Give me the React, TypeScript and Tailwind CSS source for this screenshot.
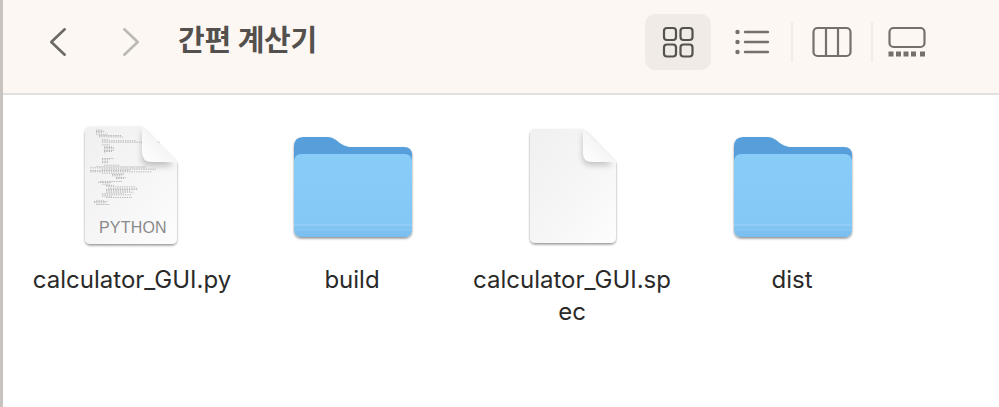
import { useId } from 'react'

const codeLines: [number, number, number][] = [
  [8, 14, 7], [8, 17, 9], [8, 20, 6], [8, 23, 12], [11, 26, 22], [11, 29, 24], [14, 35, 7],
  [14, 38, 34], [14, 41, 58], [14, 47, 8], [16, 50, 8], [16, 53, 10], [16, 56, 10], [16, 59, 10], [16, 62, 8],
  [16, 65, 2], [14, 77, 12], [14, 80, 8], [14, 83, 6], [14, 86, 6], [16, 92, 16], [8, 95, 50], [2, 98, 56], [14, 101, 54],
  [2, 104, 40], [2, 107, 62], [14, 110, 22], [24, 113, 12], [24, 116, 10], [28, 119, 10], [28, 122, 8],
]
const codeLines2: [number, number, number][] = [
  [12, 128, 22], [10, 131, 14], [14, 134, 8], [18, 137, 8], [18, 140, 30], [20, 143, 30], [18, 146, 32],
  [18, 149, 24], [18, 152, 28], [14, 155, 22], [14, 158, 30], [14, 161, 10], [18, 164, 26], [8, 170, 8], [6, 173, 14], [6, 176, 12], [8, 179, 14],
]

function DocIcon({ code }: { code?: boolean }) {
  const id = useId()
  return (
    <svg width={code ? 100 : 94} height="130" viewBox={code ? '0 0 100 130' : '0 0 94 130'} className="block">
      <defs>
        <linearGradient id={`${id}b`} x1="0" y1="0" x2="1" y2="1">
          <stop offset="0" stopColor="#f0f0f0" />
          <stop offset="0.55" stopColor="#f6f6f6" />
          <stop offset="1" stopColor="#fdfdfd" />
        </linearGradient>
        <linearGradient id={`${id}c`} x1="0" y1="1" x2="1" y2="0">
          <stop offset="0" stopColor="#ffffff" />
          <stop offset="1" stopColor="#ececec" />
        </linearGradient>
        <filter id={`${id}s`} x="-20%" y="-20%" width="140%" height="140%">
          <feDropShadow dx="0" dy="1.500" stdDeviation="1.200" floodColor="#000" floodOpacity="0.42" />
        </filter>
        <filter id={`${id}f`} x="-40%" y="-40%" width="180%" height="180%">
          <feGaussianBlur stdDeviation="3" />
        </filter>
      </defs>
      {code ? (
        <>
          <path
            d="M9 2.500 H60 L95 38 V114 Q95 120 89 120 H9 Q3 120 3 114 V8.500 Q3 2.500 9 2.500 Z"
            fill={`url(#${id}b)`}
            filter={`url(#${id}s)`}
          />
          <g transform="translate(3 -2.500) scale(1 0.45)" stroke="#666" strokeWidth="1.600" strokeDasharray="1.400 0.900" opacity="0.55">
            {[...codeLines, ...codeLines2].map(([x, y, w]) => (
              <line key={`${x}-${y}`} x1={x + 3} y1={y + 5} x2={x + 3 + w} y2={y + 5} />
            ))}
          </g>
          <path d="M60 6 V34 Q60 42 68 42 H92 Z" fill="#000" opacity="0.22" filter={`url(#${id}f)`} />
          <path d="M60 2.500 L95 38 H70 Q60 38 60 28 Z" fill={`url(#${id}c)`} />
        </>
      ) : (
        <>
          <path
            d="M10 5 H58 L91 38 V113 Q91 119 85 119 H11 Q5 119 5 113 V10 Q5 5 10 5 Z"
            fill={`url(#${id}b)`}
            filter={`url(#${id}s)`}
          />
          <path d="M58 8 V34 Q58 41 66 41 H88 Z" fill="#000" opacity="0.22" filter={`url(#${id}f)`} />
          <path d="M58 5 L91 38 H67 Q58 38 58 29 Z" fill={`url(#${id}c)`} />
        </>
      )}
    </svg>
  )
}

function FolderIcon() {
  const id = useId()
  return (
    <svg width="130" height="130" viewBox="0 0 130 130" className="block">
      <defs>
        <linearGradient id={`${id}b`} x1="0" y1="0" x2="0" y2="1">
          <stop offset="0" stopColor="#89ccf8" />
          <stop offset="0.82" stopColor="#84c8f6" />
          <stop offset="1" stopColor="#78bdee" />
        </linearGradient>
        <filter id={`${id}s`} x="-10%" y="-10%" width="120%" height="125%">
          <feDropShadow dx="0" dy="1.500" stdDeviation="1.200" floodColor="#000" floodOpacity="0.45" />
        </filter>
      </defs>
      <g filter={`url(#${id}s)`}>
        <path
          d="M7 23 Q7 13 16 13 H41 Q45 13 49 16 Q55 21.500 62 23 H117 Q125 23 125 31 V60 H7 Z"
          fill="#569fda"
        />
        <rect x="7" y="30" width="118" height="83" rx="7" fill={`url(#${id}b)`} />
      </g>
      <rect x="7" y="100" width="118" height="2" fill="#a5d8fa" opacity="0.45" />
      <rect x="7" y="105" width="118" height="1.500" fill="#a5d8fa" opacity="0.3" />
    </svg>
  )
}

function IconGrid() {
  return (
    <svg width="32" height="32" viewBox="0 0 32 32" fill="none" stroke="#55514d" strokeWidth="2.200" className="block">
      <rect x="2" y="2" width="12" height="12" rx="3" />
      <rect x="18.500" y="2" width="12" height="12" rx="3" />
      <rect x="2" y="18.500" width="12" height="12" rx="3" />
      <rect x="18.500" y="18.500" width="12" height="12" rx="3" />
    </svg>
  )
}

function IconList() {
  return (
    <svg width="34" height="26" viewBox="0 0 34 26" fill="none" stroke="#75706a" strokeWidth="2.400" strokeLinecap="round" className="block">
      <path d="M10 3 H33 M10 13 H33 M10 23 H33" />
      <circle cx="2.500" cy="3" r="2.200" fill="#75706a" stroke="none" />
      <circle cx="2.500" cy="13" r="2.200" fill="#75706a" stroke="none" />
      <circle cx="2.500" cy="23" r="2.200" fill="#75706a" stroke="none" />
    </svg>
  )
}

function IconColumns() {
  return (
    <svg width="40" height="32" viewBox="0 0 40 32" fill="none" stroke="#75706a" strokeWidth="2.200" className="block">
      <rect x="1.500" y="2" width="37" height="28" rx="4" />
      <path d="M14 2 V30 M26 2 V30" />
    </svg>
  )
}

function IconGallery() {
  return (
    <svg width="38" height="32" viewBox="0 0 38 32" className="block">
      <rect x="1.500" y="2" width="35" height="19" rx="4" fill="none" stroke="#75706a" strokeWidth="2.200" />
      <g fill="#75706a">
        <rect x="0.500" y="25.500" width="5" height="5" />
        <rect x="8" y="25.500" width="5" height="5" />
        <rect x="15.500" y="25.500" width="5" height="5" />
        <rect x="23" y="25.500" width="5" height="5" />
        <rect x="32" y="25.500" width="5" height="5" />
      </g>
    </svg>
  )
}

function Chevron({ dir, color }: { dir: 'left' | 'right'; color: string }) {
  return (
    <svg width="18" height="30" viewBox="0 0 18 30" fill="none" stroke={color} strokeWidth="2.600" strokeLinecap="round" strokeLinejoin="round" className="block">
      <path d={dir === 'left' ? 'M15.700 2.300 L2.300 15 L15.700 27.700' : 'M2.300 2.300 L15.700 15 L2.300 27.700'} />
    </svg>
  )
}

const files = [
  { name: 'calculator_GUI.py', kind: 'python' },
  { name: 'build', kind: 'folder' },
  { name: 'calculator_GUI.spec', kind: 'doc' },
  { name: 'dist', kind: 'folder' },
]

export default function App() {
  return (
    <div className="w-[999px] h-[407px] overflow-hidden flex bg-white font-['Inter','Noto_Sans_CJK_KR',sans-serif]">
      {/* Window edge */}
      <div className="w-[3px] shrink-0 bg-[#c8c3be]" />

      <div className="flex-1 flex flex-col">
        {/* Toolbar */}
        <div className="h-[95px] shrink-0 flex items-center pb-[9px] bg-[#fcf7f3] border-b-2 border-[#e0e0e0]">
          <div className="ml-[46px] flex items-center gap-[55px]">
            <Chevron dir="left" color="#6c6864" />
            <Chevron dir="right" color="#bdb9b5" />
          </div>
          <div className="ml-[38px] pb-[4px] text-[29px] font-bold leading-none tracking-[-0.2px] text-[#53504d]">간편 계산기</div>

          <div className="ml-auto flex items-center mr-[73px]">
            <div className="w-[66px] h-[56px] rounded-[10px] bg-[#f0ebe7] flex items-center justify-center">
              <IconGrid />
            </div>
            <div className="ml-[24px]"><IconList /></div>
            <div className="ml-[22px] w-[2px] h-[40px] bg-[#f0ebe7]" />
            <div className="ml-[19px]"><IconColumns /></div>
            <div className="ml-[19px] w-[2px] h-[40px] bg-[#f0ebe7]" />
            <div className="ml-[15px]"><IconGallery /></div>
          </div>
        </div>

        {/* Files */}
        <div className="pl-[19px] pt-[29px] grid grid-cols-[repeat(4,220px)]">
          {files.map((file) => (
            <div key={file.name} className="flex flex-col items-center">
              <div className="relative h-[130px] flex items-center justify-center">
                {file.kind === 'folder' ? <FolderIcon /> : <DocIcon code={file.kind === 'python'} />}
                {file.kind === 'python' && (
                  <span className="absolute left-[17px] top-[96px] text-[16px] leading-none tracking-[0.2px] text-[#8a8a8a] font-['Liberation_Sans',sans-serif]">
                    PYTHON
                  </span>
                )}
              </div>
              <div className="mt-[10px] w-[204px] break-all text-center text-[24px] leading-[32px] text-[#2a2a2a]">
                {file.name}
              </div>
            </div>
          ))}
        </div>
      </div>
    </div>
  )
}
